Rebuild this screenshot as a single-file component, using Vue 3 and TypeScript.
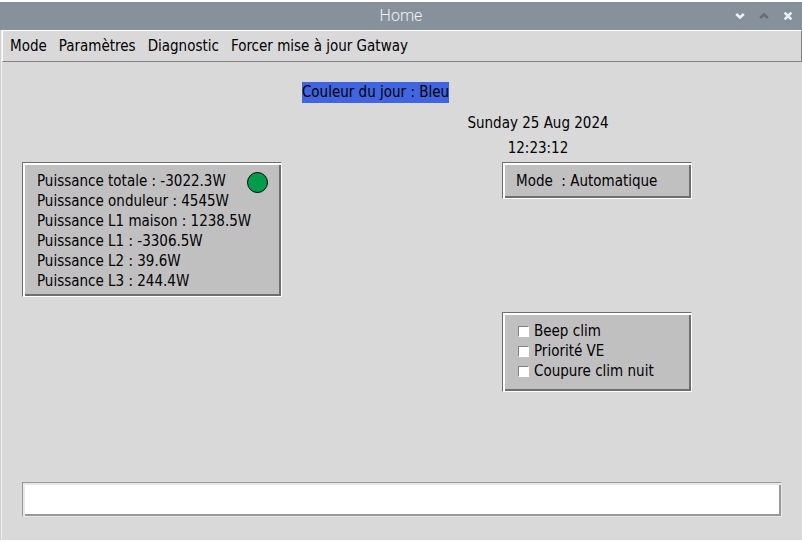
<script setup lang="ts">
import { ref } from 'vue'

interface Reading {
  label: string
  value: string
}

interface Option {
  id: string
  label: string
  checked: boolean
}

const menus: string[] = ['Mode', 'Paramètres', 'Diagnostic', 'Forcer mise à jour Gatway']

const readings: Reading[] = [
  { label: 'Puissance totale', value: '-3022.3W' },
  { label: 'Puissance onduleur', value: '4545W' },
  { label: 'Puissance L1 maison', value: '1238.5W' },
  { label: 'Puissance L1', value: '-3306.5W' },
  { label: 'Puissance L2', value: '39.6W' },
  { label: 'Puissance L3', value: '244.4W' },
]

const options = ref<Option[]>([
  { id: 'beep', label: 'Beep clim', checked: false },
  { id: 'priority', label: 'Priorité VE', checked: false },
  { id: 'night', label: 'Coupure clim nuit', checked: false },
])

const message = ref('')
</script>

<template>
  <div class="window">
    <header class="titlebar">
      <h1 class="title">Home</h1>
      <div class="controls">
        <button class="control" type="button" aria-label="Minimize">
          <svg width="10" height="10" viewBox="0 0 10 10"><path d="M1.2 3L5 6.4L8.8 3" /></svg>
        </button>
        <button class="control dim" type="button" aria-label="Maximize">
          <svg width="10" height="10" viewBox="0 0 10 10"><path d="M1.2 7L5 3.6L8.8 7" /></svg>
        </button>
        <button class="control" type="button" aria-label="Close">
          <svg width="10" height="10" viewBox="0 0 10 10"><path d="M1.6 1.6L8.4 8.4M8.4 1.6L1.6 8.4" /></svg>
        </button>
      </div>
    </header>
    <div class="client">
      <nav class="menubar">
        <button v-for="menu in menus" :key="menu" class="menu" type="button">{{ menu }}</button>
      </nav>
      <main class="content">
        <p class="day"><span class="day-color">Couleur du jour : Bleu</span></p>
        <div class="clock">
          <p class="clock-line">Sunday 25 Aug 2024</p>
          <p class="clock-line">12:23:12</p>
        </div>
        <div class="columns">
          <section class="panel power">
            <div>
              <p v-for="item in readings" :key="item.label" class="row">{{ item.label }} : {{ item.value }}</p>
            </div>
            <svg class="lamp" width="22" height="22" viewBox="0 0 22 22">
              <circle cx="10.5" cy="10.5" r="10" />
            </svg>
          </section>
          <div class="side">
            <section class="panel mode">
              <p class="row">Mode&nbsp; : Automatique</p>
            </section>
            <section class="panel options">
              <label v-for="option in options" :key="option.id" class="row option" :for="option.id">
                <input :id="option.id" v-model="option.checked" class="check" type="checkbox" />
                {{ option.label }}
              </label>
            </section>
          </div>
        </div>
        <input v-model="message" class="message" type="text" aria-label="Message" />
      </main>
    </div>
  </div>
</template>

<style>
body {
  background: #fff;
}
</style>

<style scoped>
.window {
  box-sizing: border-box;
  display: flex;
  flex-direction: column;
  min-height: 100vh;
  padding: 2px 0;
  color: #000;
  font: 15px/20px "DejaVu Sans Condensed", "DejaVu Sans", sans-serif;
  font-stretch: condensed;
}

p,
h1 {
  margin: 0;
}

button {
  padding: 0;
  border: 0;
  background: none;
  color: inherit;
  font: inherit;
}

.titlebar {
  display: grid;
  grid-template-columns: 1fr auto 1fr;
  align-items: center;
  height: 28px;
  background: #87919b;
}

.title {
  grid-column: 2;
  color: #f0f2f4;
  font: 300 16px/28px Roboto, sans-serif;
}

.controls {
  display: flex;
  justify-content: flex-end;
  gap: 14px;
  padding-right: 9px;
}

.control {
  display: flex;
  color: #f0f0f0;
}

.control.dim {
  color: #6c6c6c;
}

.control path {
  fill: none;
  stroke: currentColor;
  stroke-width: 2.6;
}

.client {
  flex: 1;
  display: flex;
  flex-direction: column;
  border-left: 1px solid #d0d0d0;
  box-shadow: inset 1px 0 #f0f0f0;
  padding-left: 1px;
  background: #d9d9d9;
}

.menubar {
  display: flex;
  align-items: center;
  gap: 12px;
  box-sizing: border-box;
  height: 32px;
  padding: 0 7px;
  border: 1px solid;
  border-color: #fff #828282 #828282 #fff;
}

.content {
  flex: 1;
  display: flex;
  flex-direction: column;
  padding: 20px 20px 23px;
}

.day {
  display: flex;
  justify-content: center;
  padding-right: 53px;
}

.day-color {
  background: #4165e0;
  line-height: 21px;
}

.clock {
  align-self: flex-end;
  width: 144px;
  margin-right: 172px;
  padding: 8px 0 1px;
  text-align: center;
}

.clock-line {
  line-height: 25px;
}

.columns {
  display: flex;
  justify-content: space-between;
  align-items: flex-start;
  padding-right: 90px;
}

.panel {
  box-sizing: border-box;
  padding: 8px 14px 6px;
  border: 1px solid;
  border-color: #6e6e6e #fff #fff #6e6e6e;
  background: #c0c0c0;
  box-shadow: inset 2px 2px #fff, inset -2px -2px #6e6e6e;
}

.power {
  display: flex;
  justify-content: space-between;
  width: 260px;
  height: 135px;
  padding-right: 12px;
}

.row {
  line-height: 20px;
  white-space: nowrap;
}

.lamp {
  flex: none;
  margin: 1px 0 0 -10px;
}

.lamp circle {
  fill: #009c4b;
  stroke: #000;
}

.side {
  display: flex;
  flex-direction: column;
  gap: 113px;
  width: 190px;
}

.mode {
  padding-left: 13px;
  height: 37px;
}

.options {
  height: 80px;
  padding-left: 15px;
}

.option {
  display: flex;
  align-items: center;
  gap: 5px;
}

.check {
  appearance: none;
  box-sizing: border-box;
  flex: none;
  width: 11px;
  height: 11px;
  margin: 0;
  border: 1px solid;
  border-color: #828282 #fff #fff #828282;
  background: #fff;
}

.check:checked {
  background: #4165e0;
}

.message {
  box-sizing: border-box;
  width: 100%;
  height: 35px;
  margin-top: auto;
  padding: 0 8px;
  border: 1px solid;
  border-color: #999 #e8e8e8 #e8e8e8 #999;
  border-radius: 0;
  outline: none;
  background: #fff;
  box-shadow: inset 2px 2px #e8e8e8, inset -2px -2px #999;
  font: inherit;
}
</style>
